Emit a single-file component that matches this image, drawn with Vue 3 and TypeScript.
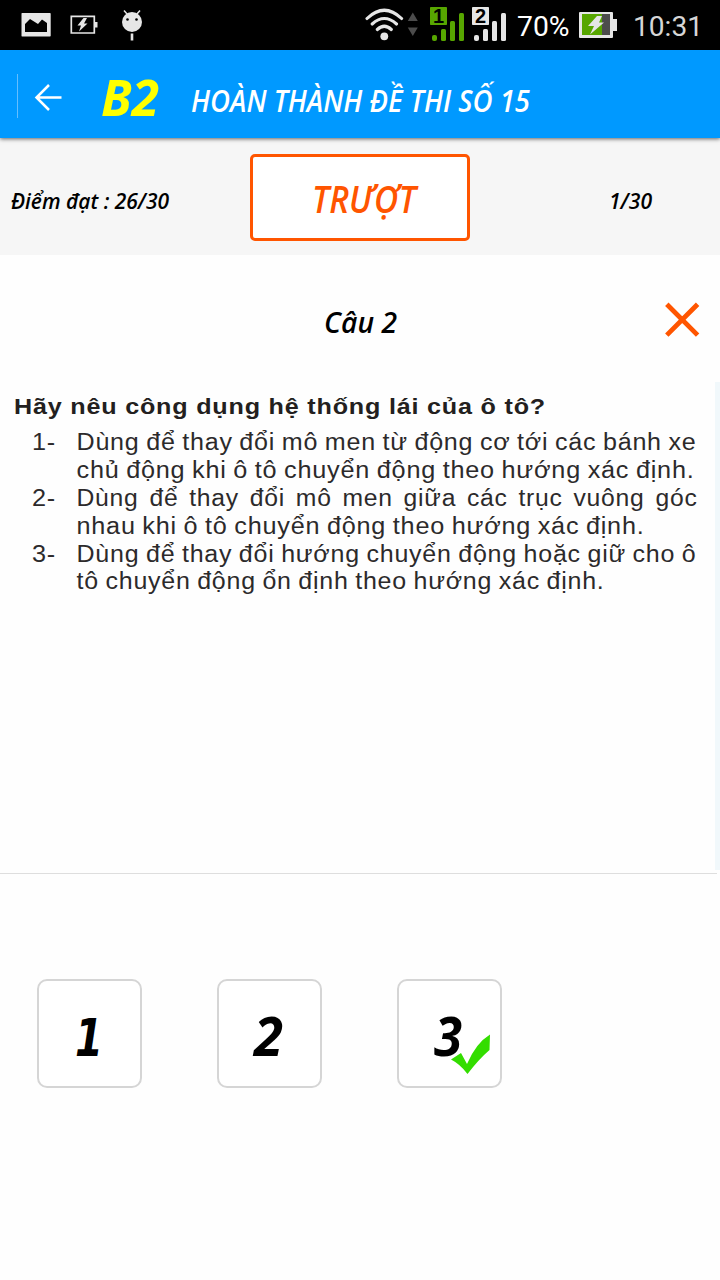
<script setup lang="ts">
interface Line {
  marker?: string
  text: string
  width: number
  gap?: number
}

interface Answer {
  label: string
  x: number
  width: number
  correct: boolean
}

const lines: Line[] = [
  { marker: '1-', text: 'Dùng để thay đổi mô men từ động cơ tới các bánh xe', width: 620 },
  { text: 'chủ động khi ô tô chuyển động theo hướng xác định.', width: 618 },
  { marker: '2-', text: 'Dùng để thay đổi mô men giữa các trục vuông góc', width: 621, gap: 3 },
  { text: 'nhau khi ô tô chuyển động theo hướng xác định.', width: 568 },
  { marker: '3-', text: 'Dùng để thay đổi hướng chuyển động hoặc giữ cho ô', width: 620 },
  { text: 'tô chuyển động ổn định theo hướng xác định.', width: 528 },
]

const answers: Answer[] = [
  { label: '1', x: 36, width: 28, correct: false },
  { label: '2', x: 35, width: 29, correct: false },
  { label: '3', x: 35, width: 28, correct: true },
]
</script>

<template>
  <div class="screen">
    <header class="status">
      <svg width="720" height="50" viewBox="0 0 720 50">
        <path fill="#e6e6e6" fill-rule="evenodd" d="M22 13h28q.7 0 .7.7v22q0 .8-.7.8H22q-.5 0-.5-.8v-22q0-.7.5-.7zM25 32h22v-9l-5-3.500-4 4.500-8-5-5 5z" />
        <path fill="none" stroke="#e6e6e6" stroke-width="1.700" d="M71.300 16.300h23v16.700h-23z" />
        <path fill="#e6e6e6" d="M95 22h2.500v5.500H95zM83.500 18l-6 7.500h3.500l-2 6 8.500-8h-3.500l3-5.500z" />
        <circle cx="132" cy="22" r="10" fill="#e6e6e6" />
        <path stroke="#e6e6e6" stroke-width="1.500" d="M124 10.500l3.500 4M140 10.500l-3.500 4" />
        <path fill="#e6e6e6" d="M130.700 33.500h2.600V40.500h-2.600z" />
        <circle cx="127.500" cy="19.500" r="1.300" />
        <circle cx="136.500" cy="19.500" r="1.300" />

        <g fill="none" stroke="#e6e6e6" stroke-width="3.100" stroke-linecap="round">
          <path d="M367 18.500q17.300-16.500 34.600 0M372.200 24q12.100-11 24.300 0M377.300 29.500q7-6.500 14 0" />
        </g>
        <circle cx="384.300" cy="36.300" r="3.900" fill="#e6e6e6" />
        <path fill="#4c4c4c" d="M407.800 21h10l-5-8.500zM407.800 27.500h10l-5 8.500z" />

        <g fill="#57a600">
          <rect x="430" y="7" width="17" height="18" rx=".8" />
          <rect x="432" y="35" width="5" height="6" rx="2" />
          <rect x="441" y="29" width="5" height="12" rx="1.500" />
          <rect x="450" y="21" width="5" height="20" rx="1.500" />
          <rect x="459" y="13" width="5" height="28" rx="1.500" />
        </g>
        <g fill="#e6e6e6">
          <rect x="472" y="7" width="17" height="18" rx=".8" />
          <rect x="474" y="35" width="5" height="6" rx="2" />
          <rect x="483" y="29" width="5" height="12" rx="1.500" />
          <rect x="492" y="21" width="5" height="20" rx="1.500" />
          <rect x="501" y="13" width="5" height="28" rx="1.500" />
        </g>
        <text class="sim" x="438.500" y="22.500">1</text>
        <text class="sim" x="480.500" y="22.500">2</text>
        <text class="roboto" x="517" y="36" fill="#fff" textLength="52.500" lengthAdjust="spacingAndGlyphs">70%</text>
        <path fill="#e6e6e6" d="M580 12h32q1 0 1 1v6h4v12h-4v6q0 1-1 1h-32q-1 0-1-1V13q0-1 1-1z" />
        <path fill="#57a600" d="M582 14h20v21h-20z" />
        <path fill="#4c4c4c" d="M602 14h8v21h-8z" />
        <path fill="#e6e6e6" d="M597 16h5l-3 6.500h5l-14 12 4-8.500h-6z" />
        <text class="roboto" x="633" y="36" fill="#d6d6d6" textLength="70" lengthAdjust="spacingAndGlyphs">10:31</text>
      </svg>
    </header>

    <nav class="toolbar">
      <svg width="720" height="88" viewBox="0 0 720 88">
        <path stroke="#65beff" d="M17.500 24v44" />
        <path fill="none" stroke="#fff" stroke-width="2.500" d="M61.500 47.500H37M49 35L36.500 47.500 49 60" />
        <text class="hand level" x="101" y="65.500" textLength="58" lengthAdjust="spacingAndGlyphs">B2</text>
        <text class="hand title" x="191" y="61.500" textLength="339" lengthAdjust="spacingAndGlyphs">HOÀN THÀNH ĐỀ THI SỐ 15</text>
      </svg>
    </nav>

    <section class="score">
      <svg class="pass" width="158" height="30">
        <text class="hand small" x="0" y="22" textLength="158" lengthAdjust="spacingAndGlyphs">Điểm đạt : 26/30</text>
      </svg>
      <div class="result">
        <svg width="104" height="50">
          <text class="hand failed" x="-1" y="37" textLength="104" lengthAdjust="spacingAndGlyphs">TRƯỢT</text>
        </svg>
      </div>
      <svg class="count" width="43" height="30">
        <text class="hand small" x="-1" y="22" textLength="43" lengthAdjust="spacingAndGlyphs">1/30</text>
      </svg>
    </section>

    <section class="heading">
      <svg class="number" width="73" height="40">
        <text class="hand" x="-1" y="29.500" textLength="73" lengthAdjust="spacingAndGlyphs">Câu 2</text>
      </svg>
      <svg class="wrong" width="34" height="34" viewBox="0 0 34 34">
        <path stroke="#ff5500" stroke-width="4.800" d="M1.800 1.300l30.800 30.800M32.600 1.300L1.800 32.100" />
      </svg>
    </section>

    <main class="question">
      <div class="sheet">
        <svg class="prompt" width="531" height="28">
          <text x="-1" y="24" textLength="532" lengthAdjust="spacingAndGlyphs">Hãy nêu công dụng hệ thống lái của ô tô?</text>
        </svg>
        <div v-for="line in lines" :key="line.text" class="line">
          <svg class="marker" width="45" height="28">
            <text v-if="line.marker" x="0" y="19.500" textLength="24" lengthAdjust="spacingAndGlyphs">{{ line.marker }}</text>
          </svg>
          <svg :width="line.width" height="28">
            <text x="-.5" y="19.500" :word-spacing="line.gap ?? -1" :textLength="line.width" lengthAdjust="spacingAndGlyphs">{{ line.text }}</text>
          </svg>
        </div>
      </div>
      <div class="edge"></div>
    </main>
    <div class="rule"></div>

    <section class="answers">
      <button v-for="answer in answers" :key="answer.label" class="answer" type="button">
        <svg width="101" height="105" viewBox="0 0 101 105">
          <text class="hand" :x="answer.x" y="75" :textLength="answer.width" lengthAdjust="spacingAndGlyphs" :class="{ footed: answer.label === '1' }">{{ answer.label }}</text>
          <path v-if="answer.correct" fill="#33dd00" d="M52 78.500l10-6.500 6 11Q77 62 91 53.500L90.500 69Q80 78 68.500 93 61 83 52 78.500z" />
        </svg>
      </button>
    </section>
  </div>
</template>

<style>
body {
  margin: 0;
  background: #fefefe;
}
</style>

<style scoped>
.screen {
  width: 720px;
  height: 1280px;
  overflow: hidden;
  background: #fefefe;
}
svg {
  display: block;
  flex: none;
  overflow: visible;
}
.hand {
  font-family: "Open Sans", "Noto Sans", sans-serif;
  font-style: italic;
  font-weight: 600;
}
.status {
  height: 50px;
  background: #000;
}
.sim {
  font: bold 20px "Liberation Sans", sans-serif;
  text-anchor: middle;
  fill: #000;
}
.roboto {
  font: 28.500px Roboto, sans-serif;
}
.toolbar {
  position: relative;
  height: 88px;
  background: #0099ff;
  box-shadow: 0 1px 4px rgba(0, 0, 0, 0.6);
}
.level {
  font-size: 51px;
  font-weight: 700;
  fill: #ffff00;
}
.title {
  font-size: 30px;
  fill: #fff;
}
.score {
  display: flex;
  align-items: flex-start;
  height: 117px;
  box-sizing: border-box;
  padding: 16px 0 0 11px;
  background: #f6f6f6;
}
.small {
  font-size: 22px;
}
.pass {
  margin-top: 33px;
}
.result {
  box-sizing: border-box;
  width: 220px;
  height: 87px;
  margin-left: 81px;
  padding: 19px 0 0 60px;
  border: 3px solid #ff5500;
  border-radius: 5px;
  background: #fff;
}
.failed {
  font-size: 37px;
  fill: #ff5500;
}
.count {
  margin: 33px 0 0 140px;
}
.heading {
  display: flex;
  align-items: flex-start;
  height: 127px;
  box-sizing: border-box;
  padding: 48px 0 0 325px;
}
.number {
  font-size: 29px;
}
.wrong {
  margin-left: 267px;
}
.question {
  display: flex;
  justify-content: space-between;
  height: 491px;
}
.sheet {
  padding: 8px 0 0 15px;
  font-family: "Liberation Sans", Arial, sans-serif;
  font-size: 23px;
  letter-spacing: 0.700px;
}
.sheet text {
  fill: #2c2a2b;
}
.prompt {
  margin-bottom: 12px;
  font-size: 22px;
  font-weight: 700;
}
.sheet .prompt text {
  fill: #231f20;
}
.line {
  display: flex;
  height: 27.900px;
  padding-left: 17px;
}
.edge {
  width: 5px;
  height: 488px;
  background: #f1f8fb;
}
.rule {
  width: 717px;
  height: 1px;
  background: #dedede;
}
.answers {
  display: flex;
  gap: 75px;
  padding: 105px 0 0 37px;
}
.answer {
  box-sizing: border-box;
  width: 105px;
  height: 109px;
  padding: 0;
  border: 2px solid #d5d5d5;
  border-radius: 10px;
  background: #fff;
  font-size: 53px;
}
.answer .hand {
  font-weight: 700;
}
.answer .footed {
  font-family: "DejaVu Sans", sans-serif;
  font-size: 52px;
}
</style>
